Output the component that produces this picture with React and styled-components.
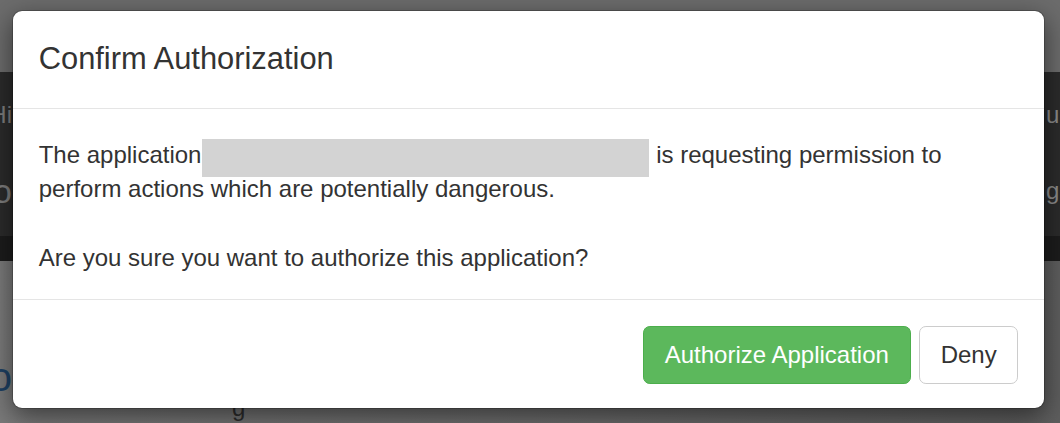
import React from "react";
import styled, { createGlobalStyle } from "styled-components";

const GlobalStyle = createGlobalStyle`
  html, body {
    margin: 0;
    padding: 0;
    width: 1060px;
    height: 423px;
    overflow: hidden;
    font-family: "Liberation Sans", Arial, Helvetica, sans-serif;
  }
  * { box-sizing: border-box; }
`;

/* ---------- underlying (dimmed) page ---------- */
const Page = styled.div`
  position: relative;
  width: 1060px;
  height: 423px;
  overflow: hidden;
  display: flex;
  flex-direction: column;
  background: #6b6b6b;
`;

const Masthead = styled.div`
  height: 74px;
  background: #6c6c6c;
`;

const Navbar = styled.div`
  height: 166px;
  background: #2b2b2b;
  display: flex;
  flex-direction: column;
  padding-top: 28px;
  gap: 46px;
`;

const NavRow = styled.div`
  display: grid;
  grid-template-columns: 12px 1fr 14px;
  height: 30px;
  align-items: center;
`;

const LeftPeek = styled.div`
  display: flex;
  justify-content: flex-end;
  white-space: nowrap;
  font-size: ${(p) => p.$size || 24}px;
  color: ${(p) => p.$color || "#7d7d7d"};
  line-height: 30px;
`;

const RightPeek = styled.div`
  display: flex;
  justify-content: flex-start;
  white-space: nowrap;
  font-size: 24px;
  color: #8a8a8a;
  line-height: 30px;
`;

const SubNav = styled.div`
  height: 26px;
  background: #1c1c1c;
`;

const Content = styled.div`
  flex: 1;
  background: linear-gradient(90deg, #7a7a7a 0%, #6e6e6e 50%, #5e5e5e 100%);
  padding-top: 96px;
  display: flex;
  flex-direction: column;
`;

const HeadingRow = styled.div`
  display: grid;
  grid-template-columns: 12px 1fr;
  height: 40px;
  align-items: center;
`;

const SubLine = styled.div`
  padding-left: 232px;
  font-size: 24px;
  line-height: 30px;
  color: #2d2d2d;
  white-space: nowrap;
  margin-top: -4px;
`;

/* ---------- modal ---------- */
const Overlay = styled.div`
  position: absolute;
  inset: 0;
  display: flex;
  align-items: flex-start;
  justify-content: flex-start;
  padding: 10px 0 0 12px;
`;

const Dialog = styled.div`
  width: 1033px;
  background: #ffffff;
  border: 1.7px solid rgba(0, 0, 0, 0.2);
  border-radius: 10px;
  box-shadow: 0 8px 26px rgba(0, 0, 0, 0.5);
  background-clip: padding-box;
  color: #333333;
  font-size: 24px;
  line-height: 34.3px;
`;

const Header = styled.div`
  padding: 25.7px 25.7px 27.7px;
  border-bottom: 1.7px solid #e5e5e5;
`;

const Title = styled.h4`
  margin: 0;
  font-size: 30.86px;
  line-height: 44.1px;
  font-weight: 400;
  color: #333333;
`;

const Body = styled.div`
  padding: 28.7px 25.7px 23.7px;
`;

const Text = styled.p`
  margin: 0 0 34.3px;
  &:last-child {
    margin-bottom: 0;
  }
`;

const Redacted = styled.span`
  display: inline-block;
  width: 447px;
  height: 38px;
  margin: -24px 0 -14px 1px;
  background: #d3d3d3;
  vertical-align: baseline;
`;

const Footer = styled.div`
  padding: 25.7px 25.7px 24px;
  border-top: 1.7px solid #e5e5e5;
  display: flex;
  justify-content: flex-end;
  gap: 8.6px;
`;

const Button = styled.button`
  font-family: inherit;
  font-size: 24px;
  line-height: 34.3px;
  padding: 11.1px 20.6px;
  border-radius: 6.9px;
  border: 1.7px solid ${(p) => (p.$variant === "success" ? "#4cae4c" : "#cccccc")};
  background: ${(p) => (p.$variant === "success" ? "#5cb85c" : "#ffffff")};
  color: ${(p) => (p.$variant === "success" ? "#ffffff" : "#333333")};
  cursor: pointer;
  white-space: nowrap;
`;

export default function App() {
  return (
    <>
      <GlobalStyle />
      <Page>
        <Masthead />
        <Navbar>
          <NavRow>
            <LeftPeek>Hi</LeftPeek>
            <div />
            <RightPeek>urs</RightPeek>
          </NavRow>
          <NavRow>
            <LeftPeek $size={34}>Do</LeftPeek>
            <div />
            <RightPeek>g to</RightPeek>
          </NavRow>
        </Navbar>
        <SubNav />
        <Content>
          <HeadingRow>
            <LeftPeek $size={40} $color="#1e4164">Co</LeftPeek>
            <div />
          </HeadingRow>
          <SubLine>g</SubLine>
        </Content>

        <Overlay>
          <Dialog role="dialog" aria-labelledby="confirm-title">
            <Header>
              <Title id="confirm-title">Confirm Authorization</Title>
            </Header>
            <Body>
              <Text>
                The application<Redacted /> is requesting permission to perform actions which are
                potentially dangerous.
              </Text>
              <Text>Are you sure you want to authorize this application?</Text>
            </Body>
            <Footer>
              <Button $variant="success">Authorize Application</Button>
              <Button>Deny</Button>
            </Footer>
          </Dialog>
        </Overlay>
      </Page>
    </>
  );
}
